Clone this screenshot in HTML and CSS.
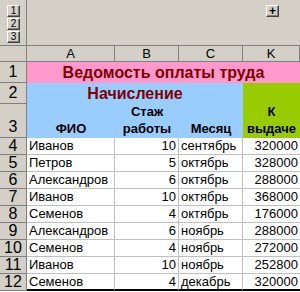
FILE: index.html
```html
<!DOCTYPE html>
<html lang="ru">

<head>
    <meta charset="UTF-8">
    <title>Ведомость оплаты труда</title>
    <link rel="stylesheet" href="styles.css">
</head>

<body>
    <div class="sheet">
        <!-- панель группировки -->
        <div class="outline-left">
            <span class="lvl">1</span>
            <span class="lvl">2</span>
            <span class="lvl">3</span>
        </div>
        <div class="outline-top">
            <span class="lvl plus">+</span>
        </div>

        <!-- заголовки столбцов -->
        <div class="corner"></div>
        <div class="colhead">A</div>
        <div class="colhead">B</div>
        <div class="colhead">C</div>
        <div class="colhead">K</div>

        <!-- строка 1 -->
        <div class="rowhead">1</div>
        <div class="title">Ведомость оплаты труда</div>

        <!-- строки 2-3 -->
        <div class="rowhead">2</div>
        <div class="group">Начисление</div>
        <div class="pay">К<br>выдаче</div>
        <div class="rowhead tall">3</div>
        <div class="head">ФИО</div>
        <div class="head">Стаж<br>работы</div>
        <div class="head">Месяц</div>

        <!-- данные -->
        <div class="rowhead">4</div><div class="cell">Иванов</div><div class="cell num">10</div><div class="cell">сентябрь</div><div class="cell num">320000</div>
        <div class="rowhead">5</div><div class="cell">Петров</div><div class="cell num">5</div><div class="cell">октябрь</div><div class="cell num">328000</div>
        <div class="rowhead">6</div><div class="cell">Александров</div><div class="cell num">6</div><div class="cell">октябрь</div><div class="cell num">288000</div>
        <div class="rowhead">7</div><div class="cell">Иванов</div><div class="cell num">10</div><div class="cell">октябрь</div><div class="cell num">368000</div>
        <div class="rowhead">8</div><div class="cell">Семенов</div><div class="cell num">4</div><div class="cell">октябрь</div><div class="cell num">176000</div>
        <div class="rowhead">9</div><div class="cell">Александров</div><div class="cell num">6</div><div class="cell">ноябрь</div><div class="cell num">288000</div>
        <div class="rowhead">10</div><div class="cell">Семенов</div><div class="cell num">4</div><div class="cell">ноябрь</div><div class="cell num">272000</div>
        <div class="rowhead">11</div><div class="cell">Иванов</div><div class="cell num">10</div><div class="cell">ноябрь</div><div class="cell num">252800</div>
        <div class="rowhead">12</div><div class="cell last">Семенов</div><div class="cell num last">4</div><div class="cell last">декабрь</div><div class="cell num last">320000</div>
    </div>
</body>

</html>
```

FILE: styles.css
```css
* {
    margin: 0;
    padding: 0;
    box-sizing: border-box;
}

body {
    background: #fff;
    font-family: "Liberation Sans", Arial, sans-serif;
    font-size: 13px;
    color: #000;
}

.sheet {
    width: 300px;
    display: grid;
    grid-template-columns: 27px 88px 64px 64px 57px;
    grid-template-rows: 46px 16px 21px 21px 34px repeat(9, 17px);
}

.outline-left,
.outline-top,
.corner,
.colhead,
.rowhead {
    background: #d4d0c8;
    border-right: 1px solid #808080;
    border-bottom: 1px solid #808080;
}

.outline-left {
    display: flex;
    flex-direction: column;
    align-items: flex-start;
    gap: 1px;
    padding: 5px 0 0 7px;
}

.outline-top {
    grid-column: 2 / 6;
    border-right: none;
    display: flex;
    justify-content: flex-end;
    padding: 5px 21px 0 0;
}

.lvl {
    width: 13px;
    height: 12px;
    border: 1px solid;
    border-color: #fff #404040 #404040 #fff;
    box-shadow: inset -1px -1px 0 #808080;
    font-size: 10px;
    line-height: 10px;
    text-align: center;
}

.plus {
    font-weight: bold;
    font-size: 12px;
}

.colhead {
    text-align: center;
    line-height: 15px;
    font-size: 13px;
}

.colhead:last-child {
    border-right: none;
}

.rowhead {
    font-size: 16px;
    text-align: center;
    display: flex;
    align-items: center;
    justify-content: center;
}

.rowhead.tall {
    align-items: flex-end;
    padding-bottom: 1px;
}

.title {
    grid-column: 2 / 6;
    background: #ff99cc;
    color: #800000;
    font-weight: bold;
    font-size: 16px;
    text-align: center;
    line-height: 21px;
}

.group {
    grid-column: 2 / 5;
    background: #99ccff;
    color: #800000;
    font-weight: bold;
    font-size: 16px;
    text-align: center;
    line-height: 21px;
}

.pay {
    grid-column: 5;
    grid-row: 4 / 6;
    background: #99cc00;
    font-weight: bold;
    text-align: center;
    display: flex;
    align-items: flex-end;
    justify-content: center;
    line-height: 17px;
    padding-bottom: 1px;
}

.head {
    background: #99ccff;
    font-weight: bold;
    text-align: center;
    display: flex;
    align-items: flex-end;
    justify-content: center;
    line-height: 17px;
    padding-bottom: 1px;
}

.cell {
    border-right: 1px solid #c0c0c0;
    border-bottom: 1px solid #c0c0c0;
    padding: 0 2px;
    line-height: 16px;
    white-space: nowrap;
}

.cell:nth-child(5n+1) {
    border-right: none;
}

.num {
    text-align: right;
}

.cell.last {
    border-bottom: 2px solid #000;
    line-height: 15px;
}
```
